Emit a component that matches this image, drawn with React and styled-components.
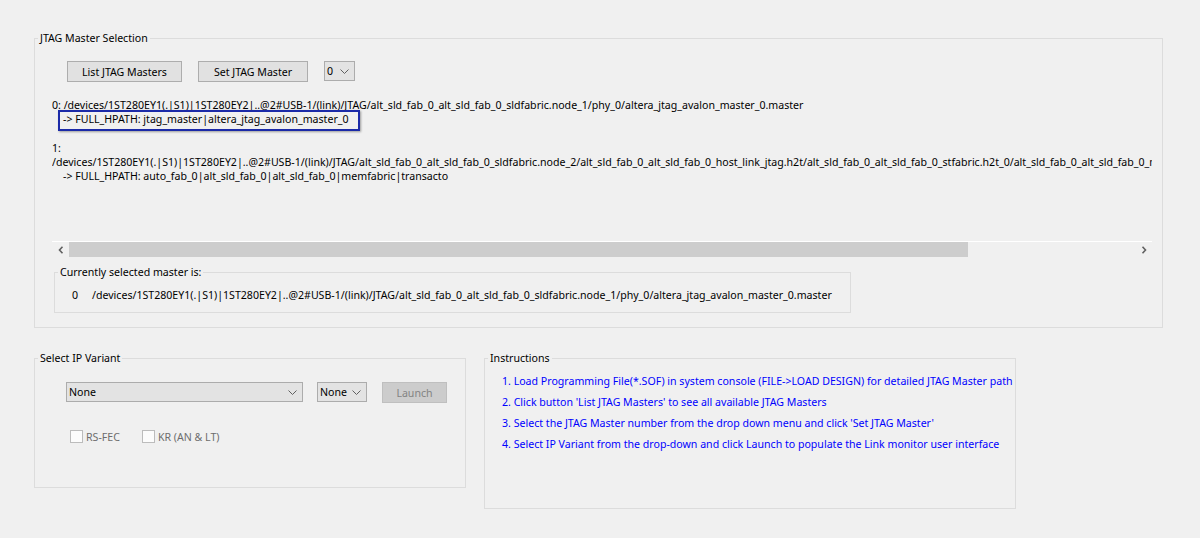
import React from 'react'
import styled, { createGlobalStyle } from 'styled-components'

const GlobalStyle = createGlobalStyle`
body{
    margin:0;
    background:#f0f0f0;
    font-family:"Noto Sans","Liberation Sans",sans-serif;
    font-size:10.6px;
    color:#000;
}
`

const masters = [
    { text: '0: /devices/1ST280EY1(.|S1)|1ST280EY2|..@2#USB-1/(link)/JTAG/alt_sld_fab_0_alt_sld_fab_0_sldfabric.node_1/phy_0/altera_jtag_avalon_master_0.master' },
    { text: '-> FULL_HPATH: jtag_master|altera_jtag_avalon_master_0', indent: true, marked: true },
    { text: '' },
    { text: '1:' },
    { text: '/devices/1ST280EY1(.|S1)|1ST280EY2|..@2#USB-1/(link)/JTAG/alt_sld_fab_0_alt_sld_fab_0_sldfabric.node_2/alt_sld_fab_0_alt_sld_fab_0_host_link_jtag.h2t/alt_sld_fab_0_alt_sld_fab_0_stfabric.h2t_0/alt_sld_fab_0_alt_sld_fab_0_memfabric.transacto' },
    { text: '-> FULL_HPATH: auto_fab_0|alt_sld_fab_0|alt_sld_fab_0|memfabric|transacto', indent: true },
]

const steps = [
    "1. Load Programming File(*.SOF) in system console (FILE->LOAD DESIGN) for detailed JTAG Master path",
    "2. Click button 'List JTAG Masters' to see all available JTAG Masters",
    "3. Select the JTAG Master number from the drop down menu and click 'Set JTAG Master'",
    "4. Select IP Variant from the drop-down and click Launch to populate the Link monitor user interface",
]

const Chevron = () => (
    <svg width="9" height="5" viewBox="0 0 9 5">
        <polyline points="0.5,0.5 4.5,4.5 8.5,0.5" fill="none" stroke="#606060" strokeWidth="1" />
    </svg>
)

const Arrow = ({ dir }) => (
    <svg width="6" height="8" viewBox="0 0 6 8">
        <polyline
            points={dir === 'left' ? '4.5,0.8 1.5,4 4.5,7.2' : '1.5,0.8 4.5,4 1.5,7.2'}
            fill="none" stroke="#606060" strokeWidth="1.6" />
    </svg>
)

const App = () => {
    return (
        <Page>
            <GlobalStyle />
            <Group $width="1129px">
                <Legend>JTAG Master Selection</Legend>
                <MasterBody>
                    <ButtonRow>
                        <Button $width="115px">List JTAG Masters</Button>
                        <Button $width="110px">Set JTAG Master</Button>
                        <Combo $width="31px">0<Chevron /></Combo>
                    </ButtonRow>
                    <ListView>
                        {masters.map((m, i) => (
                            <Line key={i} $indent={m.indent}>
                                {m.marked ? <Marked>{m.text}</Marked> : m.text}
                            </Line>
                        ))}
                    </ListView>
                    <ScrollBar>
                        <ScrollButton><Arrow dir="left" /></ScrollButton>
                        <Track>
                            <Thumb $ratio={0.843} />
                        </Track>
                        <ScrollButton><Arrow dir="right" /></ScrollButton>
                    </ScrollBar>
                    <SubGroup>
                        <Legend>Currently selected master is:</Legend>
                        <Selected>
                            <Index>0</Index>
                            <span>/devices/1ST280EY1(.|S1)|1ST280EY2|..@2#USB-1/(link)/JTAG/alt_sld_fab_0_alt_sld_fab_0_sldfabric.node_1/phy_0/altera_jtag_avalon_master_0.master</span>
                        </Selected>
                    </SubGroup>
                </MasterBody>
            </Group>
            <BottomRow>
                <Group $width="432px" $height="137px">
                    <Legend>Select IP Variant</Legend>
                    <VariantBody>
                        <ControlRow>
                            <Combo $width="237px">None<Chevron /></Combo>
                            <Combo $width="50px">None<Chevron /></Combo>
                            <Button $width="65px" disabled>Launch</Button>
                        </ControlRow>
                        <CheckRow>
                            <Check><Box />RS-FEC</Check>
                            <Check><Box />KR (AN &amp; LT)</Check>
                        </CheckRow>
                    </VariantBody>
                </Group>
                <Group $width="532px" $height="158px">
                    <Legend>Instructions</Legend>
                    <Steps>
                        {steps.map((s, i) => <Step key={i}>{s}</Step>)}
                    </Steps>
                </Group>
            </BottomRow>
        </Page>
    )
}

export default App

const Page=styled.div`
padding:31px 0 0 34px;
`
const Group=styled.fieldset`
box-sizing:border-box;
width:${p => p.$width};
height:${p => p.$height || 'auto'};
margin:0;
padding:0;
min-width:0;
border:1px solid #dcdcdc;
`
const Legend=styled.legend`
margin-left:3px;
padding:0 2px;
line-height:14px;
`
const MasterBody=styled.div`
padding:16px 0 14px 0;
`
const ButtonRow=styled.div`
display:flex;
gap:16px;
margin-left:32px;
`
const Button=styled.button`
box-sizing:border-box;
width:${p => p.$width};
height:21px;
padding:0;
font:inherit;
color:#000;
background:#e1e1e1;
border:1px solid #adadad;
&:disabled{
    background:#cccccc;
    border-color:#bfbfbf;
    color:#838383;
}
`
const Combo=styled.div`
box-sizing:border-box;
display:flex;
align-items:center;
justify-content:space-between;
width:${p => p.$width};
height:20px;
padding:0 5px 0 2px;
background:#e3e3e3;
border:1px solid #acacac;
svg{ margin-top:1px; }
`
const ListView=styled.div`
box-sizing:border-box;
width:1100px;
height:144px;
margin:15px 0 0 17px;
padding-top:1px;
overflow:hidden;
white-space:pre;
`
const Line=styled.div`
height:14.2px;
line-height:14.2px;
padding-left:${p => p.$indent ? '11px' : '0'};
`
const Marked=styled.span`
position:relative;
display:inline-block;
&::after{
    content:'';
    position:absolute;
    top:-2px;
    left:-5px;
    right:-11px;
    bottom:-5px;
    border:2px solid #1b2aa8;
    box-shadow:1px 1px 2px rgba(0,0,0,0.35);
}
`
const ScrollBar=styled.div`
display:flex;
width:1100px;
height:15px;
margin-left:17px;
border-top:1px solid #fff;
`
const ScrollButton=styled.div`
display:flex;
align-items:center;
justify-content:center;
width:17px;
`
const Track=styled.div`
flex:1;
`
const Thumb=styled.div`
width:${p => p.$ratio * 100}%;
height:100%;
background:#cdcdcd;
`
const SubGroup=styled.fieldset`
box-sizing:border-box;
width:797px;
margin:8px 0 0 19px;
padding:9px 0 10px 0;
min-width:0;
border:1px solid #dcdcdc;
`
const Selected=styled.div`
display:flex;
padding-left:17px;
line-height:14.2px;
white-space:nowrap;
`
const Index=styled.span`
width:20px;
`
const BottomRow=styled.div`
display:flex;
align-items:flex-start;
gap:18px;
margin-top:23px;
`
const VariantBody=styled.div`
padding:17px 0 0 31px;
`
const ControlRow=styled.div`
display:flex;
align-items:flex-start;
gap:14px;
& > button{ margin-left:1px; }
`
const CheckRow=styled.div`
display:flex;
gap:22px;
margin:27px 0 0 4px;
`
const Check=styled.label`
display:flex;
align-items:center;
gap:3px;
height:13px;
color:#6d6d6d;
`
const Box=styled.span`
box-sizing:border-box;
width:13px;
height:13px;
background:#fcfcfc;
border:1px solid #bcbcbc;
`
const Steps=styled.div`
padding:6px 0 0 17px;
`
const Step=styled.div`
line-height:21px;
color:#0000ff;
white-space:nowrap;
`
